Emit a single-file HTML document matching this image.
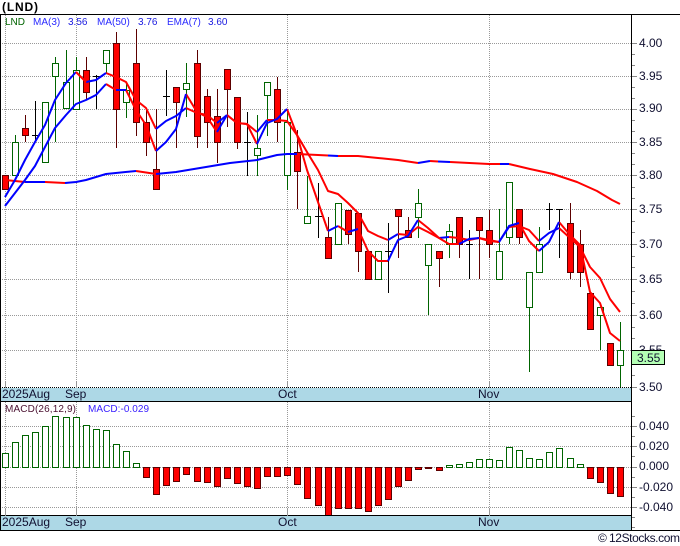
<!DOCTYPE html>
<html>
<head>
<meta charset="utf-8">
<style>
html,body{margin:0;padding:0;background:#fff;width:680px;height:546px;overflow:hidden}
svg{display:block}
text{font-family:"Liberation Sans",sans-serif;font-size:12px;fill:#101030}
</style>
</head>
<body>
<svg width="680" height="546" viewBox="0 0 680 546" xmlns="http://www.w3.org/2000/svg">
<rect width="680" height="546" fill="#fff"/>
<!-- grid -->
<g stroke="#999" stroke-width="1" stroke-dasharray="1 1" fill="none" shape-rendering="crispEdges">
<path d="M0 43.5H632M0 76.5H632M0 109.5H632M0 142.5H632M0 175.5H632M0 209.5H632M0 244.5H632M0 279.5H632M0 315.5H632M0 350.5H632"/>
<path d="M5.5 15V387M76.5 15V387M287.5 15V387M489.5 15V387"/>
<path d="M0 426.5H632M0 446.5H632M0 467.5H632M0 487.5H632M0 507.5H632"/>
<path d="M5.5 402V515M76.5 402V515M287.5 402V515M489.5 402V515"/>
</g>
<!-- axis ticks -->
<g stroke="#888" stroke-width="1" fill="none" shape-rendering="crispEdges">
<path d="M632 43.5h5M632 54.5h3M632 65.5h3M632 76.5h5M632 87.5h3M632 98.5h3M632 109.5h5M632 120.5h3M632 131.5h3M632 142.5h5M632 153.5h3M632 164.5h3M632 175.5h5M632 187.5h3M632 198.5h3M632 209.5h5M632 221.5h3M632 232.5h3M632 244.5h5M632 256.5h3M632 267.5h3M632 279.5h5M632 291.5h3M632 303.5h3M632 315.5h5M632 327.5h3M632 338.5h3M632 350.5h5M632 375.5h3M632 387.5h5"/>
<path d="M632 416.5h3M632 426.5h5M632 436.5h3M632 446.5h5M632 456.5h3M632 467.5h5M632 477.5h3M632 487.5h5M632 497.5h3M632 507.5h5M632 517.5h3M632 527.5h3"/>
</g>
<!-- wicks -->
<g fill="none" stroke-width="1" shape-rendering="crispEdges">
<path stroke="#006400" d="M15.5 135V142M55.5 57V142M66.5 50V108M76.5 57V70M106.5 50V73M126.5 82V118M186.5 63V117M257.5 115V176M267.5 82V136M287.5 109V190M307.5 176V224M418.5 189V238M428.5 244V315M449.5 224V258M499.5 209V279M509.5 182V244M529.5 272V372M539.5 227V272M600.5 307V350M620.5 322V387"/>
<path stroke="#5c0000" d="M25.5 115V142M86.5 57V100M116.5 32V148M136.5 29V136M146.5 109V156M156.5 109V189M176.5 87V148M197.5 50V148M207.5 89V148M217.5 89V163M227.5 69V127M237.5 97V149M277.5 77V142M297.5 130V209M328.5 217V258M348.5 210V244M358.5 213V272M398.5 209V258M408.5 217V237M439.5 251V287M459.5 217V258M479.5 217V279M489.5 210V258M519.5 209V244M570.5 203V279M580.5 230V287"/>
<path stroke="#000" d="M35.5 101V142M32 135.5H39M96.5 75V109M93 76.5H100M166.5 70V116M163 96.5H170M247.5 112V176M244 142.5H251M318.5 183V238M315 216.5H322M388.5 223V293M385 251.5H392M469.5 230V279M466 244.5H473M549.5 203V230M546 209.5H553M559.5 209V258M556 209.5H563"/>
</g>
<!-- green bodies -->
<g fill="#fff" stroke="#006400" stroke-width="1" shape-rendering="crispEdges">
<rect x="12.5" y="142.5" width="6" height="33"/>
<rect x="42.5" y="102.5" width="6" height="60"/>
<rect x="52.5" y="63.5" width="6" height="13"/>
<rect x="63.5" y="82.5" width="6" height="26"/>
<rect x="73.5" y="70.5" width="6" height="39"/>
<rect x="103.5" y="50.5" width="6" height="13"/>
<rect x="123.5" y="90.5" width="6" height="12"/>
<rect x="183.5" y="83.5" width="6" height="6"/>
<rect x="254.5" y="148.5" width="6" height="7"/>
<rect x="264.5" y="82.5" width="6" height="13"/>
<rect x="284.5" y="122.5" width="6" height="53"/>
<rect x="304.5" y="216.5" width="6" height="7"/>
<rect x="335.5" y="203.5" width="6" height="41"/>
<rect x="375.5" y="251.5" width="6" height="28"/>
<rect x="415.5" y="203.5" width="6" height="14"/>
<rect x="425.5" y="244.5" width="6" height="21"/>
<rect x="446.5" y="231.5" width="6" height="13"/>
<rect x="496.5" y="251.5" width="6" height="28"/>
<rect x="506.5" y="182.5" width="6" height="55"/>
<rect x="526.5" y="272.5" width="6" height="35"/>
<rect x="536.5" y="244.5" width="6" height="28"/>
<rect x="597.5" y="307.5" width="6" height="8"/>
<rect x="617.5" y="350.5" width="6" height="15"/>
</g>
<!-- red bodies -->
<g fill="#f00" stroke="#5c0000" stroke-width="1" shape-rendering="crispEdges">
<rect x="2.5" y="175.5" width="6" height="14"/>
<rect x="22.5" y="128.5" width="6" height="7"/>
<rect x="83.5" y="70.5" width="6" height="22"/>
<rect x="113.5" y="43.5" width="6" height="66"/>
<rect x="133.5" y="63.5" width="6" height="59"/>
<rect x="143.5" y="122.5" width="6" height="20"/>
<rect x="153.5" y="169.5" width="6" height="20"/>
<rect x="173.5" y="87.5" width="6" height="15"/>
<rect x="194.5" y="63.5" width="6" height="73"/>
<rect x="204.5" y="96.5" width="6" height="26"/>
<rect x="214.5" y="116.5" width="6" height="26"/>
<rect x="224.5" y="69.5" width="6" height="20"/>
<rect x="234.5" y="97.5" width="6" height="45"/>
<rect x="274.5" y="89.5" width="6" height="33"/>
<rect x="294.5" y="152.5" width="6" height="19"/>
<rect x="325.5" y="237.5" width="6" height="21"/>
<rect x="345.5" y="210.5" width="6" height="24"/>
<rect x="355.5" y="213.5" width="6" height="38"/>
<rect x="365.5" y="251.5" width="6" height="28"/>
<rect x="395.5" y="209.5" width="6" height="7"/>
<rect x="405.5" y="230.5" width="6" height="7"/>
<rect x="436.5" y="251.5" width="6" height="7"/>
<rect x="456.5" y="217.5" width="6" height="27"/>
<rect x="476.5" y="217.5" width="6" height="13"/>
<rect x="486.5" y="230.5" width="6" height="14"/>
<rect x="516.5" y="209.5" width="6" height="28"/>
<rect x="567.5" y="223.5" width="6" height="49"/>
<rect x="577.5" y="244.5" width="6" height="28"/>
<rect x="587.5" y="293.5" width="6" height="36"/>
<rect x="607.5" y="343.5" width="6" height="22"/>
</g>
<!-- MA50 -->
<g fill="none" stroke-width="2" stroke-linejoin="round">
<path stroke="#f00" d="M5 180L25 182M45 182L65 183M136 171L156 174M297 154L318 155L328 155.500M338 156L358 156L378 158L398 160L418 163M430 161L438 161.500M450 162L489 164L500 164M509 164L530 169L553 174L577 182L597 191L612 200L620 204"/>
<path stroke="#00f" d="M25 182L45 182M65 183L76 182L86 180L106 174L136 171M156 174L176 172L200 168L230 163L257 160L277 155L287 154L297 154M328 155.500L338 156M418 163L430 161M438 161.500L450 162M500 164L509 164"/>
<!-- EMA7 -->
<path stroke="#f00" d="M106 73L116 77L126 82L136 100L146 108L156 129M186 108L197 113L207 115L217 123M227 115L237 123L247 124L257 132M267 120L277 120L287 121L297 135L307 152L318 170L328 191L338 194L348 203L358 213L368 231L378 236L388 240M398 234L408 235L418 227L428 232L439 238M449 237L459 238L469 240L479 238L489 240L499 242M509 227L519 226L529 230L539 241M559 228L570 238L580 247L590 267L600 278L610 299L620 312"/>
<path stroke="#00f" d="M5 197L15 180L25 160L35 142L45 125L55 100L66 83L76 72M86 82L96 80L106 73M156 129L166 121L176 116L186 108M217 123L227 115M257 132L267 120M388 240L398 234M439 238L449 237M499 242L509 227M539 241L549 233L559 228"/>
<path stroke="#f00" d="M76 72L86 82"/>
<!-- MA3 -->
<path stroke="#f00" d="M106 84L116 90M126 90L136 110L146 125L156 151M186 94L197 112L207 117L217 132M227 115L237 123L247 124L257 144M287 109L297 135L307 170L318 202L328 231M338 226L348 232M358 229L368 251L378 261L388 261M418 220L428 228L439 238L449 244L459 244M479 238L489 241L499 242M519 223L529 241L539 251M559 222L570 235L580 245L590 292L600 303L610 333L620 341"/>
<path stroke="#00f" d="M5 206L15 193L25 180L35 166L45 147L55 128L66 115L76 104L86 100L96 95L106 84M116 90L126 90M156 151L166 142L176 129L186 94M217 132L227 115M257 144L267 123L277 119L287 109M328 231L338 226M348 232L358 229M388 261L398 240L408 236L418 220M459 244L469 239L479 238M499 242L509 226L519 223M539 251L549 242L559 222"/>
</g>
<!-- MACD bars green -->
<g fill="#fff" stroke="#006400" stroke-width="1" shape-rendering="crispEdges">
<rect x="2.500" y="453.500" width="6" height="14"/>
<rect x="12.500" y="442.500" width="6" height="25"/>
<rect x="22.500" y="435.500" width="6" height="32"/>
<rect x="32.500" y="432.500" width="6" height="35"/>
<rect x="42.500" y="426.500" width="6" height="41"/>
<rect x="52.500" y="416.500" width="6" height="51"/>
<rect x="63.500" y="417.500" width="6" height="50"/>
<rect x="73.500" y="417.500" width="6" height="50"/>
<rect x="83.500" y="425.500" width="6" height="42"/>
<rect x="93.500" y="429.500" width="6" height="38"/>
<rect x="103.500" y="430.500" width="6" height="37"/>
<rect x="113.500" y="444.500" width="6" height="23"/>
<rect x="123.500" y="451.500" width="6" height="16"/>
<rect x="133.500" y="463.500" width="6" height="4"/>
<rect x="446.500" y="465.500" width="6" height="2"/>
<rect x="456.500" y="464.500" width="6" height="3"/>
<rect x="466.500" y="462.500" width="6" height="5"/>
<rect x="476.500" y="459.500" width="6" height="8"/>
<rect x="486.500" y="459.500" width="6" height="8"/>
<rect x="496.500" y="460.500" width="6" height="7"/>
<rect x="506.500" y="447.500" width="6" height="20"/>
<rect x="516.500" y="450.500" width="6" height="17"/>
<rect x="526.500" y="458.500" width="6" height="9"/>
<rect x="536.500" y="459.500" width="6" height="8"/>
<rect x="546.500" y="452.500" width="6" height="15"/>
<rect x="556.500" y="448.500" width="6" height="19"/>
<rect x="567.500" y="458.500" width="6" height="9"/>
<rect x="577.500" y="464.500" width="6" height="3"/>
</g>
<!-- MACD bars red -->
<g fill="#f00" stroke="#5c0000" stroke-width="1" shape-rendering="crispEdges">
<rect x="143.500" y="467.500" width="6" height="10"/>
<rect x="153.500" y="467.500" width="6" height="27"/>
<rect x="163.500" y="467.500" width="6" height="18"/>
<rect x="173.500" y="467.500" width="6" height="14"/>
<rect x="183.500" y="467.500" width="6" height="7"/>
<rect x="194.500" y="467.500" width="6" height="14"/>
<rect x="204.500" y="467.500" width="6" height="15"/>
<rect x="214.500" y="467.500" width="6" height="19"/>
<rect x="224.500" y="467.500" width="6" height="11"/>
<rect x="234.500" y="467.500" width="6" height="16"/>
<rect x="244.500" y="467.500" width="6" height="19"/>
<rect x="254.500" y="467.500" width="6" height="21"/>
<rect x="264.500" y="467.500" width="6" height="9"/>
<rect x="274.500" y="467.500" width="6" height="9"/>
<rect x="284.500" y="467.500" width="6" height="8"/>
<rect x="294.500" y="467.500" width="6" height="17"/>
<rect x="304.500" y="467.500" width="6" height="31"/>
<rect x="315.500" y="467.500" width="6" height="38"/>
<rect x="325.500" y="467.500" width="6" height="48"/>
<rect x="335.500" y="467.500" width="6" height="41"/>
<rect x="345.500" y="467.500" width="6" height="41"/>
<rect x="355.500" y="467.500" width="6" height="41"/>
<rect x="365.500" y="467.500" width="6" height="44"/>
<rect x="375.500" y="467.500" width="6" height="38"/>
<rect x="385.500" y="467.500" width="6" height="32"/>
<rect x="395.500" y="467.500" width="6" height="19"/>
<rect x="405.500" y="467.500" width="6" height="13"/>
<rect x="415.500" y="467.500" width="6" height="2"/>
<rect x="425.500" y="467.500" width="6" height="1"/>
<rect x="436.500" y="467.500" width="6" height="3"/>
<rect x="587.500" y="467.500" width="6" height="11"/>
<rect x="597.500" y="467.500" width="6" height="15"/>
<rect x="607.500" y="467.500" width="6" height="26"/>
<rect x="617.500" y="467.500" width="6" height="29"/>
</g>
<!-- date strips -->
<rect x="0" y="388" width="632" height="13" fill="#add8e6"/>
<rect x="0" y="516" width="632" height="14" fill="#add8e6"/>
<!-- frame -->
<g fill="none" stroke="#000" stroke-width="1" shape-rendering="crispEdges">
<path d="M0 14.500H680M0.500 14V530M631.500 14V530M0 401.500H632M0 515.500H632M0 530.500H680"/>
<path d="M0 387.500H632" stroke-dasharray="1 1"/>
</g>
<g stroke="#999" stroke-width="1" shape-rendering="crispEdges">
<path d="M5.500 509V516M76.500 509V516M287.500 509V516M489.500 509V516M5.500 381V388M76.500 381V388M287.500 381V388M489.500 381V388"/>
</g>
<!-- labels -->
<text x="2" y="11" textLength="36" style="font-size:12px;font-weight:bold;fill:#000">(LND)</text>
<text x="5" y="25" style="font-size:10px;fill:#006400">LND</text>
<text x="33" y="25" style="font-size:10px;fill:#2a2aff">MA(3)</text>
<text x="68" y="25" style="font-size:10px;fill:#1a1ae0">3.56</text>
<text x="97" y="25" style="font-size:10px;fill:#2a2aff">MA(50)</text>
<text x="138" y="25" style="font-size:10px;fill:#1a1ae0">3.76</text>
<text x="167" y="25" style="font-size:10px;fill:#2a2aff">EMA(7)</text>
<text x="208" y="25" style="font-size:10px;fill:#1a1ae0">3.60</text>
<text x="5" y="412" textLength="71" style="font-size:10px;fill:#4a1030">MACD(26,12,9)</text>
<text x="88" y="412" textLength="61" style="font-size:10px;fill:#3a20ff">MACD:-0.029</text>
<text x="639" y="47">4.00</text>
<text x="639" y="80">3.95</text>
<text x="639" y="112">3.90</text>
<text x="639" y="146">3.85</text>
<text x="639" y="179">3.80</text>
<text x="639" y="213">3.75</text>
<text x="639" y="248">3.70</text>
<text x="639" y="283">3.65</text>
<text x="639" y="319">3.60</text>
<text x="639" y="354">3.55</text>
<text x="639" y="391">3.50</text>
<rect x="631.500" y="350.500" width="33" height="14" fill="#b4ffb4" stroke="#000" shape-rendering="crispEdges"/>
<text x="637" y="362">3.55</text>
<text x="639" y="430">0.040</text>
<text x="639" y="450">0.020</text>
<text x="639" y="470">0.000</text>
<text x="639" y="491">-0.020</text>
<text x="639" y="511">-0.040</text>
<text x="2" y="398">2025Aug</text>
<text x="65" y="398">Sep</text>
<text x="278" y="398">Oct</text>
<text x="478" y="398">Nov</text>
<text x="2" y="526">2025Aug</text>
<text x="65" y="526">Sep</text>
<text x="278" y="526">Oct</text>
<text x="478" y="526">Nov</text>
<text x="598" y="542">©</text>
<text x="609" y="542" textLength="71">12Stocks.com</text>
</svg>
</body>
</html>
